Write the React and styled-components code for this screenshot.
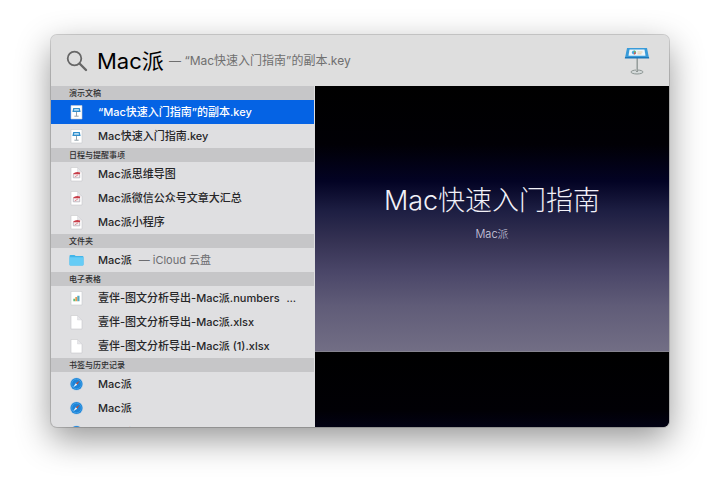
import React from "react";
import styled, { createGlobalStyle } from "styled-components";

const GlobalStyle = createGlobalStyle`
  * { box-sizing: border-box; }
  body {
    margin: 0;
    background: #fff;
    font-family: Inter, "Noto Sans CJK SC", sans-serif;
    color: #262628;
  }
`;

const Page = styled.main`
  display: flex;
  height: 100vh;
  padding: 35px 51px 67px;
  overflow: hidden;
`;

const Panel = styled.div`
  flex: 1;
  min-width: 0;
  display: flex;
  flex-direction: column;
  overflow: hidden;
  border-radius: 6px;
  background: #dfdfe1;
  box-shadow: 0 0 0 1px rgba(0, 0, 0, 0.16), 0 12px 34px rgba(0, 0, 0, 0.42);
`;

const SearchBar = styled.header`
  flex: none;
  display: flex;
  align-items: center;
  height: 51px;
  padding: 0 19px 0 15px;
  background: #dedede;
`;

const Field = styled.label`
  flex: 1;
  display: flex;
  align-items: center;
  gap: 9px;
`;

const Query = styled.input`
  width: 68px;
  height: 36px;
  padding: 0;
  border: 0;
  outline: 0;
  background: transparent;
  color: #000;
  font: 400 22px/36px Inter, "Noto Sans CJK SC", sans-serif;
`;

const Completion = styled.span`
  margin-left: -5px;
  color: #6f6f6f;
  font-size: 12px;
  line-height: 18px;
  white-space: nowrap;
`;

const Body = styled.div`
  flex: 1;
  min-height: 0;
  display: grid;
  grid-template-columns: minmax(0, 263fr) minmax(0, 354fr);
  column-gap: 1px;
  overflow: hidden;
`;

const Results = styled.nav`
  min-height: 0;
  overflow: hidden;
`;

const GroupTitle = styled.h2`
  height: 14px;
  margin: 0;
  padding-left: 18px;
  background: #c6c6c8;
  color: #2e2e30;
  font-size: 8px;
  font-weight: 500;
  line-height: 14px;
`;

const List = styled.ul`
  margin: 0;
  padding: 0;
  list-style: none;
`;

const Result = styled.button`
  display: flex;
  align-items: center;
  width: 100%;
  height: 24px;
  padding: 0 18px;
  border: 0;
  background: ${(p) => (p.$selected ? "#0563e4" : "transparent")};
  color: ${(p) => (p.$selected ? "#fff" : "#262628")};
  font: 500 11px/24px Inter, "Noto Sans CJK SC", sans-serif;
  text-align: left;
  white-space: nowrap;

  svg {
    flex: none;
    margin-right: 14px;
  }
`;

const Detail = styled.span`
  margin-left: 7px;
  color: ${(p) => (p.$strong ? "#262628" : "#6c6c70")};
  font-weight: 400;
`;

const Preview = styled.section`
  min-height: 0;
  overflow: hidden;
  background: #000;
`;

const Slide = styled.article`
  display: flex;
  flex-direction: column;
  align-items: center;
  aspect-ratio: 4 / 3;
  padding-top: 93px;
  border-bottom: 1px solid #85838f;
  background: linear-gradient(
    #000 0%,
    #010005 22%,
    #030324 36%,
    #1d1e42 47%,
    #343152 58%,
    #4a4668 70%,
    #605c78 83%,
    #726e85 100%
  );
  color: #f2f1f8;
`;

const SlideTitle = styled.h1`
  margin: 0;
  font-size: 27px;
  font-weight: 300;
  line-height: 44px;
  white-space: nowrap;
`;

const SlideSubtitle = styled.p`
  margin: 3px 0 0;
  color: #d5d3e2;
  font-size: 11px;
  font-weight: 300;
  line-height: 16px;
`;

const SearchIcon = () => (
  <svg width="22" height="22" viewBox="0 0 22 22" fill="none" stroke="#676767" aria-hidden="true">
    <circle cx="8.5" cy="8.5" r="6.8" strokeWidth="1.8" />
    <path d="M13.5 13.5L20 20" strokeWidth="2.4" strokeLinecap="round" />
  </svg>
);

const KeynoteIcon = () => (
  <svg width="26" height="28" viewBox="0 0 26 28" role="img" aria-label="Keynote">
    <ellipse cx="13" cy="25" rx="6" ry="2" fill="#d5dada" stroke="#8b9492" strokeWidth="1" />
    <path d="M12 10h2v15h-2z" fill="#909795" />
    <path d="M12.5 11h.6v13h-.6z" fill="#dce0df" />
    <path d="M3 1h20l2 10H1z" fill="#399bd9" />
    <path d="M1 10h24l.2 1.6H.8z" fill="#1c78b9" />
    <path d="M5.5 2.6h15l1 6.2h-17z" fill="#edf6fa" />
    <circle cx="10" cy="5.5" r="2.1" fill="#4ca8dc" />
    <path d="M10 5.5V3.4a2.1 2.1 0 0 1 2 2.1z" fill="#77c05c" />
    <path d="M10 5.5h2a2.1 2.1 0 0 1-2 2.1z" fill="#df5149" />
    <path d="M13.5 5h5M13.5 6.8h4" stroke="#e5bf8e" strokeWidth=".8" />
  </svg>
);

const FileIcon = ({ kind }) => (
  <svg width="15" height="16" viewBox="0 0 15 16" aria-hidden="true">
    {kind === "folder" && (
      <>
        <path d="M.5 4q0-1 1-1h4l1.200 1h6.800q1 0 1 1v7.500q0 1-1 1h-12q-1 0-1-1z" fill="#42b5e9" />
        <path d="M.5 5.200h14v7.300q0 1-1 1h-12q-1 0-1-1z" fill="#66ccf6" />
      </>
    )}
    {kind === "safari" && (
      <>
        <circle cx="7.500" cy="8" r="6.600" fill="#b9cfe4" />
        <circle cx="7.500" cy="8" r="6" fill="#1d83d8" />
        <circle cx="7.500" cy="8" r="4.800" fill="none" stroke="#4fb0ec" strokeWidth=".6" />
        <path d="M10.800 4.700L8.200 8.700 6.800 7.300z" fill="#b9503f" />
        <path d="M4.200 11.300L6.800 7.300 8.200 8.700z" fill="#f2f8ff" />
      </>
    )}
    {(kind === "keynote" || kind === "numbers") && (
      <path d="M2 1.500h11v13.500H2z" fill="#fff" stroke="#c7c9cc" strokeWidth=".6" />
    )}
    {kind === "keynote" && (
      <>
        <path d="M4.200 4h6.600l.8 3.900H3.400z" fill="#318fcd" />
        <path d="M5.300 5h4.400l.3 1.800H5z" fill="#b9ddf2" />
        <path d="M7.500 7.900v4M5.400 12.200h4.200" stroke="#8796a0" strokeWidth=".9" />
      </>
    )}
    {kind === "numbers" && (
      <>
        <path d="M4.300 8.700h2v2.500h-2z" fill="#5dbd79" />
        <path d="M6.300 7h2v4.200h-2z" fill="#e69b50" />
        <path d="M8.300 5.700h2.200v5.500H8.300z" fill="#55a9be" />
      </>
    )}
    {(kind === "pdf" || kind === "blank") && (
      <>
        <path d="M2 1.500h6.500l4.500 4.500v9H2z" fill="#fff" stroke="#c7c7ca" strokeWidth=".6" />
        <path d="M8.500 1.500V6H13z" fill="#e6e6e9" stroke="#d0d0d3" strokeWidth=".4" />
      </>
    )}
    {kind === "pdf" && (
      <>
        <path d="M4 7.800q3-3 7.200-1.200l-.2 2H4z" fill="#c73d49" />
        <path d="M4.300 8.400v3.400h6.400V8.400" fill="#f5eef0" stroke="#a9a4b0" strokeWidth=".7" />
        <path d="M5.800 10.900l3.200-2" stroke="#d97a80" strokeWidth=".8" />
      </>
    )}
  </svg>
);

const groups = [
  {
    title: "演示文稿",
    items: [
      { icon: "keynote", name: "“Mac快速入门指南”的副本.key", selected: true },
      { icon: "keynote", name: "Mac快速入门指南.key" },
    ],
  },
  {
    title: "日程与提醒事项",
    items: [
      { icon: "pdf", name: "Mac派思维导图" },
      { icon: "pdf", name: "Mac派微信公众号文章大汇总" },
      { icon: "pdf", name: "Mac派小程序" },
    ],
  },
  { title: "文件夹", items: [{ icon: "folder", name: "Mac派", detail: "— iCloud 云盘" }] },
  {
    title: "电子表格",
    items: [
      { icon: "numbers", name: "壹伴-图文分析导出-Mac派.numbers", detail: "…", strong: true },
      { icon: "blank", name: "壹伴-图文分析导出-Mac派.xlsx" },
      { icon: "blank", name: "壹伴-图文分析导出-Mac派 (1).xlsx" },
    ],
  },
  {
    title: "书签与历史记录",
    items: [
      { icon: "safari", name: "Mac派" },
      { icon: "safari", name: "Mac派" },
      { icon: "safari", name: "Mac派" },
    ],
  },
];

export default function App() {
  return (
    <Page>
      <GlobalStyle />
      <Panel>
        <SearchBar>
          <Field>
            <SearchIcon />
            <Query type="text" aria-label="搜索" defaultValue="Mac派" />
            <Completion>— “Mac快速入门指南”的副本.key</Completion>
          </Field>
          <KeynoteIcon />
        </SearchBar>
        <Body>
          <Results>
            {groups.map((group) => (
              <section key={group.title}>
                <GroupTitle>{group.title}</GroupTitle>
                <List>
                  {group.items.map((item, i) => (
                    <li key={i}>
                      <Result type="button" $selected={item.selected}>
                        <FileIcon kind={item.icon} />
                        {item.name}
                        {item.detail && <Detail $strong={item.strong}>{item.detail}</Detail>}
                      </Result>
                    </li>
                  ))}
                </List>
              </section>
            ))}
          </Results>
          <Preview>
            <Slide>
              <SlideTitle>Mac快速入门指南</SlideTitle>
              <SlideSubtitle>Mac派</SlideSubtitle>
            </Slide>
            <Slide />
          </Preview>
        </Body>
      </Panel>
    </Page>
  );
}
